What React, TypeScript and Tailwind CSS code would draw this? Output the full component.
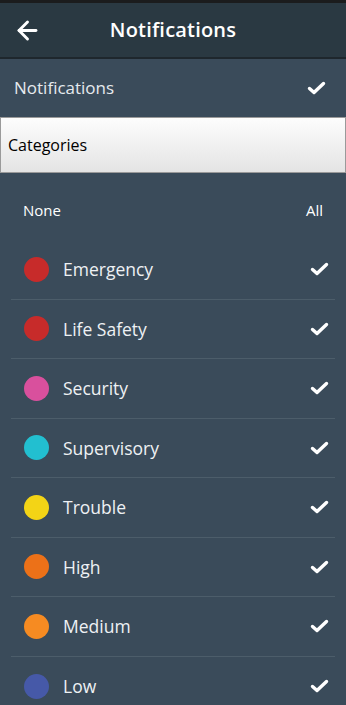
import { ArrowLeft } from 'lucide-react';

interface Category {
  name: string;
  color: string;
}

const categories: Category[] = [
  { name: 'Emergency', color: 'bg-[#c72b2a]' },
  { name: 'Life Safety', color: 'bg-[#c72b2a]' },
  { name: 'Security', color: 'bg-[#d9509d]' },
  { name: 'Supervisory', color: 'bg-[#22bfd0]' },
  { name: 'Trouble', color: 'bg-[#f3d416]' },
  { name: 'High', color: 'bg-[#ec7118]' },
  { name: 'Medium', color: 'bg-[#f68b22]' },
  { name: 'Low', color: 'bg-[#4659a8]' },
];

function Check() {
  return (
    <svg width="19" height="14" viewBox="0 0 19 14" className="shrink-0">
      <path
        d="M2.5 7.5 L7 11.5 L16.5 2.5"
        fill="none"
        stroke="white"
        strokeWidth="3.4"
        strokeLinejoin="round"
        strokeLinecap="round"
      />
    </svg>
  );
}

export default function App() {
  return (
    <div className="flex h-[705px] w-[346px] flex-col overflow-hidden bg-[#3a4b5a] font-['Open_Sans','Noto_Sans',sans-serif]">
      <div className="h-[3px] shrink-0 bg-[#1b1c1d]" />

      {/* header */}
      <div className="relative flex h-[56px] shrink-0 items-center border-b-2 border-[#1e272d] bg-[#2a3942]">
        <ArrowLeft className="ml-[13px] h-[29px] w-[29px] text-white" strokeWidth={2.4} />
        <h1 className="absolute left-0 right-0 text-center text-[20px] font-semibold tracking-[0.2px] text-white">
          Notifications
        </h1>
      </div>

      <div className="flex h-[58px] shrink-0 items-center justify-between pl-[14px] pr-[20px]">
        <span className="text-[17px] text-[#e6eaee]">Notifications</span>
        <Check />
      </div>

      <div className="flex h-[56px] shrink-0 items-center border border-[#9a9a9a] bg-gradient-to-b from-[#fdfdfd] to-[#e4e4e4] pl-[7px]">
        <span className="text-[16px] text-black">Categories</span>
      </div>

      <div className="flex h-[67px] shrink-0 items-center justify-between pl-[23px] pr-[23px] pt-[8px] text-[15px] text-white">
        <span>None</span>
        <span>All</span>
      </div>

      <ul className="mx-[11px] shrink-0">
        {categories.map((c, i) => (
          <li
            key={c.name}
            className={
              'flex h-[59.5px] items-center ' +
              (i < categories.length - 1 ? 'border-b border-[#4c5d6a]' : '')
            }
          >
            <span className={'ml-[13px] h-[25px] w-[25px] shrink-0 rounded-full ' + c.color} />
            <span className="ml-[14px] flex-1 text-[17.5px] text-[#eef1f4]">{c.name}</span>
            <span className="mr-[6px]">
              <Check />
            </span>
          </li>
        ))}
      </ul>
    </div>
  );
}
